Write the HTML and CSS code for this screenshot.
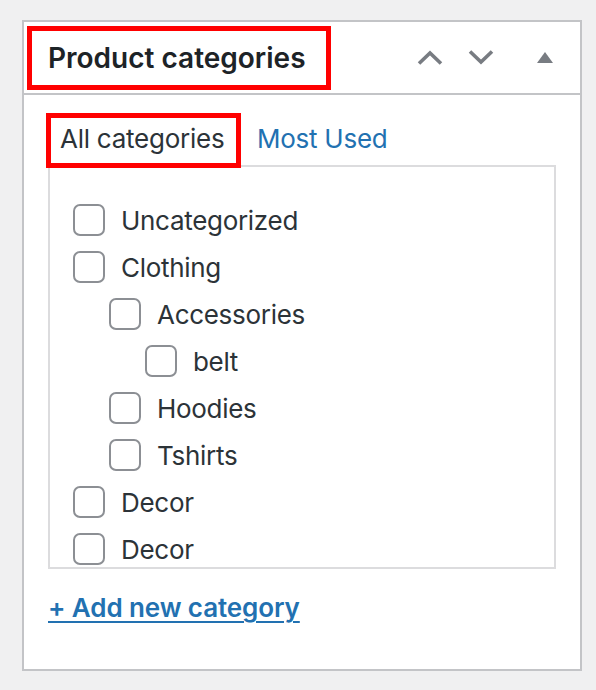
FILE: index.html
```html
<!DOCTYPE html>
<html lang="en">
<head>
<meta charset="UTF-8">
<title>Product categories</title>
<link rel="stylesheet" href="styles.css">
</head>
<body>

<div class="postbox">
  <div class="postbox-header">
    <h2 class="hndle mark">Product categories</h2>
    <div class="handle-actions">
      <button class="handle-btn up" aria-label="Move up">
        <svg width="26" height="15" viewBox="0 0 26 15"><polyline points="2,13.5 13,3 24,13.5" fill="none" stroke="currentColor" stroke-width="3.6"/></svg>
      </button>
      <button class="handle-btn down" aria-label="Move down">
        <svg width="26" height="15" viewBox="0 0 26 15"><polyline points="2,1.5 13,12 24,1.5" fill="none" stroke="currentColor" stroke-width="3.6"/></svg>
      </button>
      <button class="handle-btn toggle" aria-label="Toggle panel">
        <svg width="16" height="11" viewBox="0 0 16 11"><polygon points="0,11 8,0 16,11" fill="currentColor"/></svg>
      </button>
    </div>
  </div>

  <div class="inside">
    <ul class="tabs">
      <li class="tab active mark">All categories</li>
      <li class="tab"><a href="#">Most Used</a></li>
    </ul>

    <div class="tabs-panel">
      <ul class="checklist">
        <li><label><span class="box"></span>Uncategorized</label></li>
        <li><label><span class="box"></span>Clothing</label>
          <ul class="children">
            <li><label><span class="box"></span>Accessories</label>
              <ul class="children">
                <li><label><span class="box"></span>belt</label></li>
              </ul>
            </li>
            <li><label><span class="box"></span>Hoodies</label></li>
            <li><label><span class="box"></span>Tshirts</label></li>
          </ul>
        </li>
        <li><label><span class="box"></span>Decor</label></li>
        <li><label><span class="box"></span>Decor</label></li>
      </ul>
    </div>

    <a class="add-new" href="#">+ Add new category</a>
  </div>
</div>

</body>
</html>
```

FILE: styles.css
```css
body {
  margin: 0;
  padding: 20px 0 0 22px;
  height: 690px;
  box-sizing: border-box;
  overflow: hidden;
  background: #f0f0f1;
  font-family: Inter, "Liberation Sans", sans-serif;
  color: #2c3338;
}
ul {
  list-style: none;
  margin: 0;
  padding: 0;
}
.postbox {
  width: 560px;
  height: 651px;
  box-sizing: border-box;
  background: #fff;
  border: 2px solid #c3c4c7;
}
.postbox-header {
  display: flex;
  align-items: flex-start;
  height: 73px;
  box-sizing: border-box;
  border-bottom: 2px solid #c3c4c7;
}
.mark {
  border: 5px solid #ff0000;
  box-sizing: border-box;
}
.hndle {
  margin: 4px 0 0 3px;
  width: 304px;
  height: 64px;
  display: flex;
  align-items: center;
  padding-left: 16px;
  font-size: 28px;
  font-weight: 600;
  color: #1d2327;
}
.handle-actions {
  margin-left: auto;
  display: flex;
  height: 71px;
  padding-right: 12px;
}
.handle-btn {
  width: 46px;
  height: 100%;
  padding: 0;
  border: 0;
  background: none;
  color: #787c82;
  display: flex;
  align-items: center;
  justify-content: center;
  cursor: pointer;
}
.handle-btn.up {
  margin-right: 5px;
}
.handle-btn.down {
  margin-right: 18px;
}
.handle-btn.toggle svg {
  margin-top: -1px;
}
.inside {
  padding-top: 18px;
}
.tabs {
  display: flex;
  align-items: center;
  margin-left: 22px;
  height: 55px;
  position: relative;
  z-index: 1;
  letter-spacing: -0.25px;
}
.tab {
  font-size: 26px;
  padding-bottom: 5px;
}
.tab.active {
  width: 195px;
  height: 55px;
  display: flex;
  align-items: center;
  padding-left: 9px;
  background: #fff;
}
.tab a {
  margin-left: 16px;
  color: #2271b1;
  text-decoration: none;
}
.tabs-panel {
  margin: -3px 0 0 24px;
  width: 508px;
  height: 404px;
  box-sizing: border-box;
  border: 2px solid #dcdcde;
  overflow: hidden;
}
.checklist {
  padding: 29px 0 0 23px;
}
.checklist .children {
  margin-left: 36px;
}
.checklist label {
  display: flex;
  align-items: center;
  height: 47px;
  font-size: 26px;
  letter-spacing: -0.3px;
  color: #2c3338;
}
.checklist label {
  padding-top: 2px;
  box-sizing: border-box;
}
.box {
  width: 32px;
  height: 32px;
  box-sizing: border-box;
  border: 2px solid #8c8f94;
  border-radius: 7px;
  background: #fff;
  margin: -2px 16px 0 0;
  flex: none;
}
.add-new {
  display: inline-block;
  margin: 23px 0 0 24px;
  font-size: 26px;
  font-weight: 600;
  letter-spacing: -0.1px;
  color: #2271b1;
  text-decoration: underline;
  text-decoration-thickness: 2px;
  text-underline-offset: 4px;
}
```
